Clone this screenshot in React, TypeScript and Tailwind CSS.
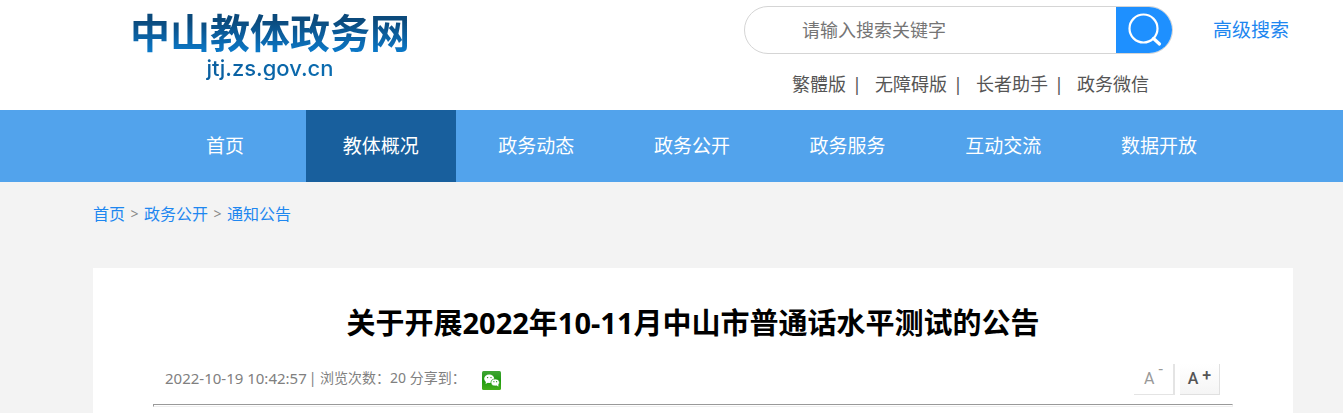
import { clsx } from "clsx";

const navItems = [
  { label: "首页" },
  { label: "教体概况", active: true },
  { label: "政务动态" },
  { label: "政务公开" },
  { label: "政务服务" },
  { label: "互动交流" },
  { label: "数据开放" },
];

const quickLinks = ["繁體版", "无障碍版", "长者助手", "政务微信"];

const breadcrumbs = ["首页", "政务公开", "通知公告"];

function SearchIcon() {
  return (
    <svg className="h-9 w-9" viewBox="0 0 36 36" fill="none" stroke="white" aria-hidden="true">
      <circle cx="17.5" cy="16.5" r="14" strokeWidth="2.2" />
      <path d="M27.5 26.5L33.5 32" strokeWidth="3.2" strokeLinecap="round" />
    </svg>
  );
}

function WechatIcon() {
  return (
    <svg className="h-[19px] w-[19px]" viewBox="0 0 19 19" aria-hidden="true">
      <defs>
        <linearGradient id="wechat-bg" x1="0" y1="0" x2="0" y2="1">
          <stop offset="0" stopColor="#3fa535" />
          <stop offset="0.5" stopColor="#1f9a10" />
          <stop offset="1" stopColor="#45b01a" />
        </linearGradient>
      </defs>
      <rect width="19" height="19" rx="1.5" fill="url(#wechat-bg)" />
      <path d="M4 10.5L3.6 13L6.2 11.5Z" fill="#fff" />
      <ellipse cx="7.2" cy="7.8" rx="5" ry="4.2" fill="#fff" />
      <ellipse cx="13.2" cy="11.5" rx="4.2" ry="3.5" fill="#fff" stroke="#2a9d18" strokeWidth="0.7" />
      <path d="M14.5 14.3L16.4 15.8L16.2 13.4Z" fill="#fff" />
      <circle cx="5.6" cy="6.6" r="0.7" fill="#1f8a12" />
      <circle cx="9" cy="6.6" r="0.7" fill="#1f8a12" />
      <circle cx="11.9" cy="10.7" r="0.6" fill="#1f8a12" />
      <circle cx="14.6" cy="10.7" r="0.6" fill="#1f8a12" />
    </svg>
  );
}

function Header() {
  return (
    <header className="flex h-[110px] items-start justify-between bg-white pr-[54px] pl-[130px]">
      <a href="#" className="flex flex-col items-center pt-3">
        <span className="bg-linear-to-b from-[#0b4a7c] from-20% to-[#0a78c8] to-90% bg-clip-text font-['Liberation_Sans','Noto_Sans_CJK_SC',sans-serif] text-[40px] leading-[44px] font-bold text-transparent">
          中山教体政务网
        </span>
        <span className="bg-linear-to-r from-[#0a5fa0] to-[#0a6cb0] bg-clip-text font-['Inter',sans-serif] text-[22px] leading-6 font-medium text-transparent">
          jtj.zs.gov.cn
        </span>
      </a>

      <div className="flex items-start gap-10 pt-[6px]">
        <div className="flex flex-col">
          <form className="flex h-12 w-[429px] overflow-hidden rounded-full border border-[#d5d5d5]">
            <input
              type="text"
              aria-label="搜索"
              placeholder="请输入搜索关键字"
              className="min-w-0 flex-1 pl-[57px] text-[18px] text-[#757575] outline-none placeholder:text-[#757575]"
            />
            <button
              type="button"
              aria-label="搜索"
              className="flex w-14 items-center justify-center bg-[#1e90ff]"
            >
              <SearchIcon />
            </button>
          </form>
          <ul className="flex pt-4 pl-12 text-[18px] leading-7 text-[#555]">
            {quickLinks.map((link, i) => (
              <li key={link} className="flex">
                {i > 0 && <span className="w-[29px] pl-[6px]">|</span>}
                <a href="#">{link}</a>
              </li>
            ))}
          </ul>
        </div>
        <a href="#" className="text-[19px] leading-12 text-[#1e87f0]">
          高级搜索
        </a>
      </div>
    </header>
  );
}

function NavBar() {
  return (
    <nav className="bg-[#52a3ec] pr-[109px] pl-[150px]">
      <ul className="flex justify-between">
        {navItems.map((item) => (
          <li key={item.label}>
            <a
              href="#"
              className={clsx(
                "block w-[150px] text-center text-[19px] leading-[72px] text-white",
                item.active && "bg-[#185f9d]"
              )}
            >
              {item.label}
            </a>
          </li>
        ))}
      </ul>
    </nav>
  );
}

function Breadcrumb() {
  return (
    <nav aria-label="当前位置" className="flex h-[86px] pt-5 text-[16px] leading-6">
      {breadcrumbs.map((crumb, i) => (
        <span key={crumb} className="flex">
          {i > 0 && <span className="w-[19px] text-center text-[14px] text-[#888]">&gt;</span>}
          <a href="#" className="text-[#1e87f0]">
            {crumb}
          </a>
        </span>
      ))}
    </nav>
  );
}

function Article() {
  return (
    <article className="bg-white pt-[34px] pr-[60px] pb-2 pl-[60px]">
      <h1 className="text-center text-[29px] leading-[42px] font-bold text-black">
        关于开展2022年10-11月中山市普通话水平测试的公告
      </h1>
      <div className="flex h-[60px] items-start justify-between pt-5 pr-[13px] pl-3">
        <div className="flex items-start text-[14px] leading-7 text-[#808080]">
          <time className="text-[15px]">2022-10-19 10:42:57</time>
          <span className="pl-[2px]">| 浏览次数：20 分享到：</span>
          <button type="button" aria-label="微信" className="ml-4 pt-[7px]">
            <WechatIcon />
          </button>
        </div>
        <div className="flex gap-[5px] font-[Roboto,sans-serif]">
          <button
            type="button"
            className="flex h-[31px] w-[41px] justify-center gap-1 border-r-2 border-b border-[#e4e4e4] text-[16px] leading-[29px] text-[#999]"
          >
            A<span className="leading-3">-</span>
          </button>
          <button
            type="button"
            className="flex h-[31px] w-10 justify-center gap-1 border-r border-b border-[#e0e0e0] bg-linear-to-b from-white to-[#f5f5f5] text-[16px] leading-[29px] font-medium text-[#555]"
          >
            A<span className="leading-6">+</span>
          </button>
        </div>
      </div>
      <hr className="h-[3px] border border-t-[#999] border-r-[#eee] border-b-[#eee] border-l-[#999]" />
    </article>
  );
}

export default function App() {
  return (
    <div className="min-h-screen bg-[#f3f3f3] font-['Noto_Sans','Noto_Sans_CJK_SC',sans-serif]">
      <Header />
      <NavBar />
      <main className="pr-[50px] pl-[93px]">
        <Breadcrumb />
        <Article />
      </main>
    </div>
  );
}
